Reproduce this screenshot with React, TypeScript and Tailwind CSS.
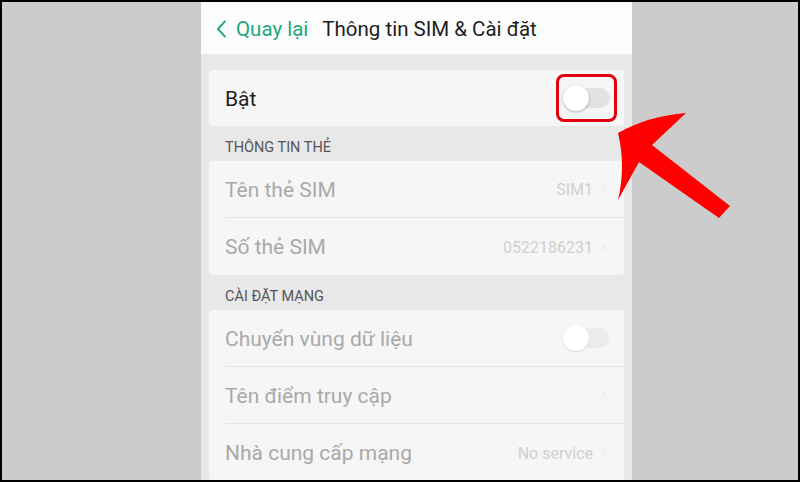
import React from 'react';

const Chevron = ({ className = '', left = false }: { className?: string; left?: boolean }) => (
  <svg viewBox="0 0 8 14" className={className} fill="none" stroke="currentColor" strokeWidth="1.4" strokeLinecap="round" strokeLinejoin="round">
    <path d={left ? 'M6.5 1.5 L1.5 7 L6.5 12.5' : 'M1.5 1.5 L6.5 7 L1.5 12.5'} />
  </svg>
);

const Toggle = ({ faint = false }: { faint?: boolean }) => (
  <div className="relative w-[47px] h-[26px] flex items-center">
    <div className={`absolute left-[2px] right-0 h-[20px] rounded-full ${faint ? 'bg-[#ececec]' : 'bg-[#e2e2e2]'}`} />
    <div className={`absolute left-0 w-[26px] h-[26px] rounded-full bg-white ${faint ? 'shadow-[0_1px_2px_rgba(0,0,0,0.12)]' : 'shadow-[0_1px_3px_rgba(0,0,0,0.3)]'}`} />
  </div>
);

const Row = ({ label, value, toggle, chevron = true, last = false }: { label: string; value?: string; toggle?: boolean; chevron?: boolean; last?: boolean }) => (
  <div className="pl-[16px]">
    <div className={`h-[57px] flex items-center justify-between ${toggle ? 'pr-[14px]' : 'pr-[18px]'} ${last ? '' : 'border-b border-[#e4e4e4]'}`}>
      <span className="text-[21px] text-[#a9a9a9] pt-[3px]">{label}</span>
      <div className="flex items-center gap-[8px]">
        {value && <span className="text-[16px] text-[#d0d0d0] pt-[2px]">{value}</span>}
        {toggle ? <Toggle faint /> : chevron && <Chevron className="w-[5px] h-[10px] text-[#dcdcdc]" />}
      </div>
    </div>
  </div>
);

const Section = ({ title }: { title: string }) => (
  <div className="h-[35px] flex items-center pt-[8px] pl-[16px] text-[14.5px] text-[#555555]">{title}</div>
);

export default function App() {
  return (
    <div className="w-[800px] h-[482px] bg-black p-[2px] relative overflow-hidden" style={{ fontFamily: 'Roboto, "Noto Sans", sans-serif' }}>
      <div className="w-full h-full bg-[#cccccc] pl-[199px]">
        <div className="w-[431px] h-full bg-[#e8e8e8] flex flex-col overflow-hidden">
          {/* header */}
          <div className="h-[52px] shrink-0 bg-[#fcfcfc] flex items-center pl-[15px] pt-[2px]">
            <Chevron left className="w-[11px] h-[20px] text-[#23a87c]" />
            <span className="ml-[9px] text-[20.5px] text-[#23a87c]">Quay lại</span>
            <span className="ml-[14px] text-[20.5px] text-[#1e1e1e]">Thông tin SIM &amp; Cài đặt</span>
          </div>

          <div className="px-[8px] pt-[16px] flex flex-col">
            <div className="h-[56px] bg-[#f6f6f6] rounded-[4px] flex items-center justify-between pl-[16px] pr-[7px]">
              <span className="text-[21px] text-[#1e1e1e] pt-[3px]">Bật</span>
              <div className="w-[61px] h-[48px] border-[3px] border-[#e00010] rounded-[8px] flex items-center justify-center">
                <Toggle />
              </div>
            </div>

            <Section title="THÔNG TIN THẺ" />
            <div className="bg-[#f6f6f6] rounded-[4px]">
              <Row label="Tên thẻ SIM" value="SIM1" />
              <Row label="Số thẻ SIM" value="0522186231" last />
            </div>

            <Section title="CÀI ĐẶT MẠNG" />
            <div className="bg-[#f6f6f6] rounded-[4px]">
              <Row label="Chuyển vùng dữ liệu" toggle />
              <Row label="Tên điểm truy cập" />
              <Row label="Nhà cung cấp mạng" value="No service" last />
            </div>
          </div>
        </div>
      </div>

      {/* annotation arrow */}
      <svg className="absolute inset-0 pointer-events-none" width="800" height="482" viewBox="0 0 800 482">
        <path
          d="M618 133 Q648 116 686 113 L652 145 L730 206 L719 218 L639 162 L618 200 Q626 166 618 133 Z"
          fill="#ff0000"
        />
      </svg>
    </div>
  );
}
